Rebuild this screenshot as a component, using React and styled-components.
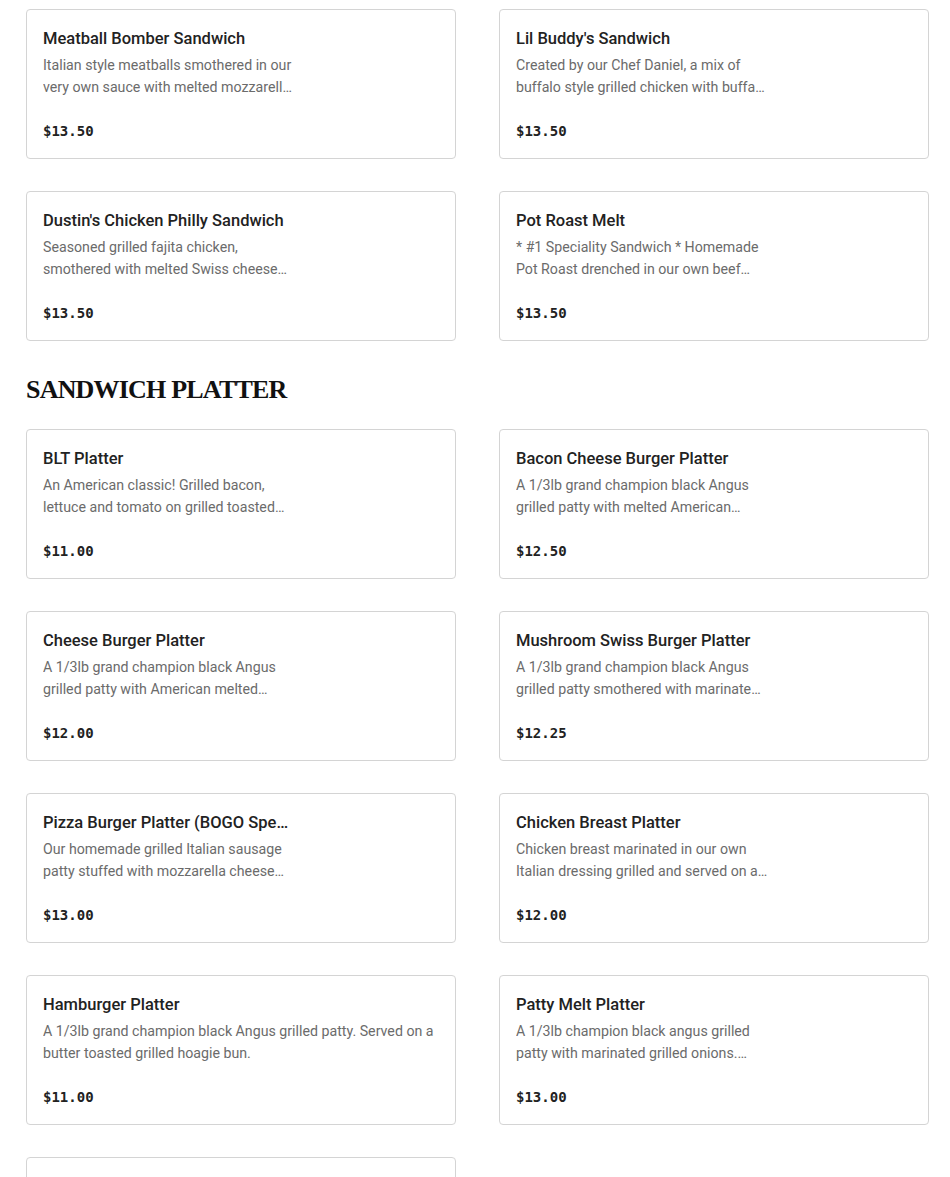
import styled, { createGlobalStyle } from "styled-components"

const Global = createGlobalStyle`
    body {
        margin: 0;
        background: #fff;
        font-family: Roboto, "Liberation Sans", sans-serif;
    }
    * { box-sizing: border-box; }
`

const Page = styled.div`
    padding: 9px 22px 0 26px;
`
const Grid = styled.div`
    display: grid;
    grid-template-columns: 430px 430px;
    column-gap: 43px;
    row-gap: 32px;
`
const SectionTitle = styled.h2`
    margin: 0;
    padding: 33px 0 23px;
    font-family: "Liberation Serif", serif;
    font-weight: 700;
    font-size: 26px;
    line-height: 32px;
    color: #111;
    letter-spacing: -0.8px;
`
const Card = styled.div`
    border: 1px solid #d4d4d4;
    border-radius: 4px;
    height: 150px;
    padding: 18px 16px 16px 16px;
    display: flex;
    flex-direction: column;
`
const Name = styled.div`
    font-size: 16.5px;
    font-weight: 500;
    line-height: 22px;
    color: #222;
    max-width: 252px;
    white-space: nowrap;
    overflow: hidden;
    text-overflow: ellipsis;
`
const Desc = styled.div`
    margin-top: 4px;
    font-size: 14.2px;
    line-height: 22px;
    color: #6b6b6b;
    max-width: ${p => (p.$wide ? "395px" : "252px")};
    display: -webkit-box;
    -webkit-line-clamp: 2;
    -webkit-box-orient: vertical;
    overflow: hidden;
`
const Price = styled.div`
    margin-top: auto;
    font-family: "DejaVu Sans Mono", "Liberation Mono", monospace;
    font-weight: 700;
    font-size: 14px;
    line-height: 22px;
    color: #222;
`

const sandwiches = [
    { name: "Meatball Bomber Sandwich", desc: "Italian style meatballs smothered in our very own sauce with melted mozzarella cheese.", price: "$13.50" },
    { name: "Lil Buddy's Sandwich", desc: "Created by our Chef Daniel, a mix of buffalo style grilled chicken with buffalo ranch dressing.", price: "$13.50" },
    { name: "Dustin's Chicken Philly Sandwich", desc: "Seasoned grilled fajita chicken, smothered with melted Swiss cheese and grilled onions.", price: "$13.50" },
    { name: "Pot Roast Melt", desc: "* #1 Speciality Sandwich * Homemade Pot Roast drenched in our own beef gravy.", price: "$13.50" },
]

const platters = [
    { name: "BLT Platter", desc: "An American classic! Grilled bacon, lettuce and tomato on grilled toasted bread.", price: "$11.00" },
    { name: "Bacon Cheese Burger Platter", desc: "A 1/3lb grand champion black Angus grilled patty with melted American cheese.", price: "$12.50" },
    { name: "Cheese Burger Platter", desc: "A 1/3lb grand champion black Angus grilled patty with American melted cheese.", price: "$12.00" },
    { name: "Mushroom Swiss Burger Platter", desc: "A 1/3lb grand champion black Angus grilled patty smothered with marinated mushrooms.", price: "$12.25" },
    { name: "Pizza Burger Platter (BOGO Special)", desc: "Our homemade grilled Italian sausage patty stuffed with mozzarella cheese and sauce.", price: "$13.00" },
    { name: "Chicken Breast Platter", desc: "Chicken breast marinated in our own Italian dressing grilled and served on a bun.", price: "$12.00" },
    { name: "Hamburger Platter", desc: "A 1/3lb grand champion black Angus grilled patty. Served on a butter toasted grilled hoagie bun.", price: "$11.00", wide: true },
    { name: "Patty Melt Platter", desc: "A 1/3lb champion black angus grilled patty with marinated grilled onions. Served on rye.", price: "$13.00" },
    { name: "Grilled Chicken Platter", desc: "Grilled chicken breast served with lettuce and tomato.", price: "$12.00" },
]

const Item = ({ item }) => (
    <Card>
        <Name>{item.name}</Name>
        <Desc $wide={item.wide}>{item.desc}</Desc>
        <Price>{item.price}</Price>
    </Card>
)

const App = () => {
    return (
        <Page>
            <Global />
            <Grid>
                {sandwiches.map(s => <Item key={s.name} item={s} />)}
            </Grid>
            <SectionTitle>SANDWICH PLATTER</SectionTitle>
            <Grid>
                {platters.map(p => <Item key={p.name} item={p} />)}
            </Grid>
        </Page>
    )
}

export default App
